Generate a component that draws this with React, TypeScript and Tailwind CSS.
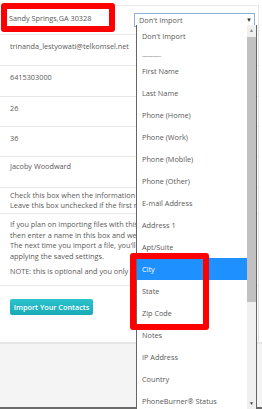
const options = [
  "First Name",
  "Last Name",
  "Phone (Home)",
  "Phone (Work)",
  "Phone (Mobile)",
  "Phone (Other)",
  "E-mail Address",
  "Address 1",
  "Apt/Suite",
  "City",
  "State",
  "Zip Code",
  "Notes",
  "IP Address",
  "Country",
  "PhoneBurner® Status",
];

function App() {
  return (
    <div
      className="relative w-[262px] h-[409px] overflow-hidden bg-[#f4f4f4] text-[#595959] text-[7.3px]"
      style={{ fontFamily: '"Open Sans", "Liberation Sans", sans-serif' }}
    >
      {/* main white panel */}
      <div className="h-[344px] bg-white border-b-2 border-[#e6e6e6] pt-[5px]">
        <div className="w-[259px] border-r border-[#e3e3e3] h-full">
          <div className="h-[29px] border-t border-[#e8e8e8] flex items-start justify-between pl-[7px] pr-[4px] pt-[4px]">
            <div className="w-[101px] h-[17px] flex items-center px-[2px] whitespace-nowrap">Sandy Springs,GA 30328</div>
            <div className="mt-[3px] -mr-[1px] w-[121px] h-[14px] border border-[#8eafd6] flex items-center justify-between pl-[4px] pr-[2px]">
              <span>Don't Import</span>
              <span className="text-[6px] text-[#333]">▼</span>
            </div>
          </div>
          <div className="h-[31px] border-t border-[#e8e8e8] pl-[10px] pt-[5px] leading-[12px] whitespace-nowrap">trinanda_lestyowati@telkomsel.net</div>
          <div className="h-[31px] border-t border-[#e8e8e8] pl-[10px] pt-[5px] leading-[12px]">6415303000</div>
          <div className="h-[30px] border-t border-[#e8e8e8] pl-[10px] pt-[5px] leading-[12px]">26</div>
          <div className="h-[30px] border-t border-[#e8e8e8] pl-[10px] pt-[5px] leading-[12px]">36</div>
          <div className="h-[31px] border-t border-[#e8e8e8] pl-[10px] pt-[3px] leading-[12px]">Jacoby Woodward</div>
          <div className="h-[26px] border-t border-[#e8e8e8] pl-[10px] pt-[2px]">
            <div className="w-[126px] overflow-hidden whitespace-nowrap leading-[10px]">
              <div>Check this box when the information you are importing has a header row.</div>
              <div>Leave this box unchecked if the first row contains contact data.</div>
            </div>
          </div>
          <div className="h-[72px] border-t border-[#e8e8e8] pl-[10px] pt-[5px]">
            <div className="w-[126px] overflow-hidden whitespace-nowrap leading-[10.7px]">
              <div>If you plan on importing files with this format again,</div>
              <div>then enter a name in this box and we'll save these settings.</div>
              <div>The next time you import a file, you'll have the option of</div>
              <div>applying the saved settings.</div>
              <div className="mt-[4px]">NOTE: this is optional and you only need to do it once.</div>
            </div>
          </div>
          <div className="border-t border-[#e8e8e8] pl-[10px] pt-[13px]">
            <button className="h-[16px] w-[83px] rounded-[2px] bg-gradient-to-b from-[#2cc3cc] to-[#17aab5] text-white text-[7.3px] font-semibold flex items-center justify-center">
              Import Your Contacts
            </button>
          </div>
        </div>
      </div>
      <div className="absolute left-0 right-0 bottom-0 h-[2px] bg-[#6b6b6b]" />

      {/* open dropdown list */}
      <div className="absolute left-[136px] top-[25px] w-[121px] h-[384px] bg-white border-l border-r border-[#666] flex">
        <div className="flex-1">
          <div className="h-[22px] flex items-center pl-[5px]">Don't Import</div>
          <div className="h-[13px] flex items-end pl-[5px] leading-[8px] text-[6px] tracking-[-0.5px]">-------------</div>
          {options.map((o) => (
            <div
              key={o}
              className={`h-[22px] flex items-center pl-[5px] ${o === "City" ? "bg-[#1e90ff] text-white" : ""}`}
            >
              {o}
            </div>
          ))}
        </div>
        <div className="w-[9px] bg-[#f0f0f0] flex flex-col items-center">
          <div className="h-[12px] flex items-center text-[5px] text-[#888]">▲</div>
          <div className="w-[9px] h-[265px] bg-[#c1c1c1]" />
          <div className="mt-auto mb-[3px] text-[5px] leading-[6px] text-[#444]">▼</div>
        </div>
      </div>

      {/* red annotation boxes */}
      <div className="absolute left-[1px] top-[3px] w-[114px] h-[29px] border-[6px] border-[#ff0000] rounded-[3px]" />
      <div className="absolute left-[130px] top-[253px] w-[79px] h-[77px] border-[6px] border-[#ff0000] rounded-[3px]" />
    </div>
  );
}

export default App;
